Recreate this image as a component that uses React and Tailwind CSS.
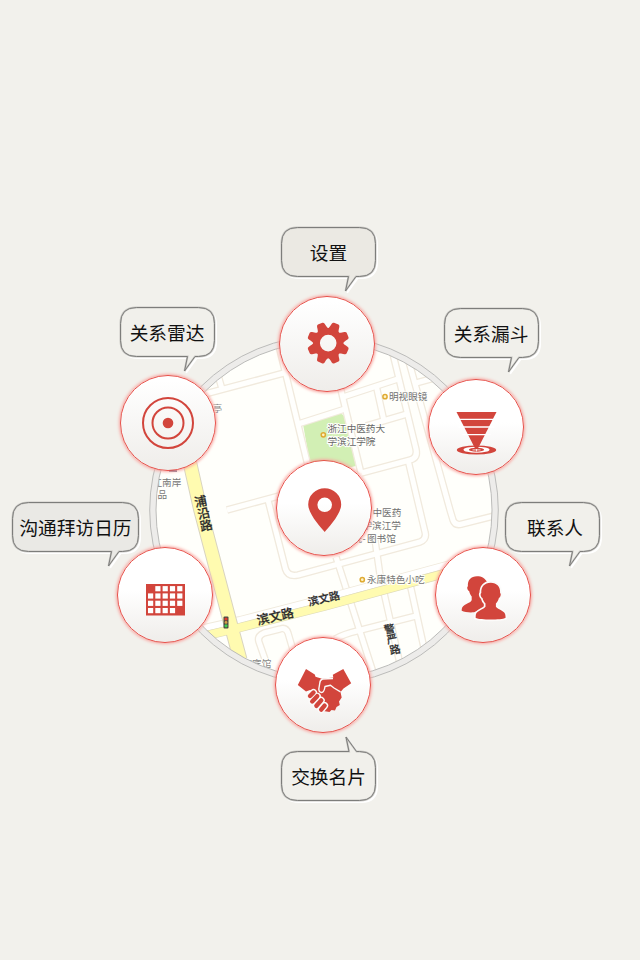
const RED = '#d2453c';
const CJK = "font-['Liberation_Sans','Noto_Sans_CJK_SC',sans-serif]";

const whiteRoads = [
  // north-west block
  'M205 394 L284 373', 'M222 389 L216 368', 'M278 342 L308 466',
  // north-east grid
  'M298 424 L345 409', 'M343 397 L398 379', 'M340 386 L361 473', 'M376.5 387 L384 421',
  'M361.5 473 L410 460 Q418 458 416 449 L392 350', 'M366 426 L407 414', 'M416 383 L438 377',
  'M409 362 L450 510 L453 520 Q455 526 462 524 L502 514',
  'M408 460 L425 532 Q427 539 420 542 L298 575 Q288 577 285.5 569 L268 500',
  // centre
  'M227 510 L290 493',
  'M336 557 L346 588 L373 672', 'M375 540 L380 575 L400 664', 'M410 584 L424 648',
  'M335 639 Q344 634 357 631 L416 616',
  // south
  'M266 662 L259 642 Q257 636 264 633 L280 629 Q286 627 288 633 L293 650',
];

function Label({ x, y, fill, children }) {
  return (
    <text x={x} y={y} fontSize="9.6" fill={fill} stroke="#fffffb" strokeWidth="2" paintOrder="stroke">
      {children}
    </text>
  );
}

function Poi({ x, y }) {
  return <circle cx={x} cy={y} r="2.1" fill="#fff3c4" stroke="#dfaa32" strokeWidth="1.5" />;
}

const mainRoad = 'M200 637 L240 627.5 L325 606 L450 572';
const avenue = 'M187 450 L200.5 510 L229 618 L243 670';

function CityMap() {
  return (
    <svg viewBox="0 0 640 960" className={`absolute inset-0 h-[960px] w-[640px] ${CJK}`}>
      <defs><clipPath id="disc"><circle cx="324" cy="510" r="168" /></clipPath></defs>
      <circle cx="324" cy="510" r="174.3" fill="#edecea" stroke="#bcbcba" />
      <circle cx="324" cy="510" r="168" fill="#fffffb" />
      <g clipPath="url(#disc)">
        <path d="M303 424 L338 414 Q343 413 345 418 L356 466 L312 476 Z" fill="#d2efb4" />
        <g fill="none" strokeLinejoin="round">
          {whiteRoads.map((d) => <path key={d} d={d} stroke="#f1eadd" strokeWidth="7.6" />)}
          {whiteRoads.map((d) => <path key={d} d={d} stroke="#fffffd" strokeWidth="5" />)}
          <path d="M200 629 L240 620 L325 598 L450 564" stroke="#f0eadc" strokeWidth="8" />
          <path d="M200 629 L240 620 L325 598 L450 564" stroke="#ffffff" strokeWidth="6" />
          <path d={mainRoad} stroke="#dedab8" strokeWidth="9.4" />
          <path d={avenue} stroke="#d9d4c0" strokeWidth="14.6" />
          <path d={avenue} stroke="#fffbb0" strokeWidth="12.6" />
          <path d={mainRoad} stroke="#fffbb0" strokeWidth="8" />
        </g>
        <rect x="223.5" y="616.5" width="5" height="12" rx="1" fill="#4d4a45" />
        <circle cx="226" cy="619" r="1.6" fill="#e23c2e" />
        <circle cx="226" cy="622.4" r="1.4" fill="#d8a044" />
        <circle cx="226" cy="625.8" r="1.6" fill="#42cf4c" />
        <rect x="169" y="469" width="8" height="3" fill="#75708c" />
        <Label x={212.5} y={411.5} fill="#888">亭</Label>
        <Label x={152.5} y={485.5} fill="#777">江南岸</Label>
        <Label x={157.5} y={498} fill="#777">品</Label>
        <Label x={389} y={400} fill="#707070">明视眼镜</Label>
        <Label x={327.5} y={432} fill="#666">浙江中医药大</Label>
        <Label x={327.5} y={444.5} fill="#666">学滨江学院</Label>
        <Label x={372.5} y={516} fill="#707070">中医药</Label>
        <Label x={362.5} y={528.5} fill="#707070">学滨江学</Label>
        <Label x={352.5} y={541.5} fill="#707070">院</Label>
        <Label x={362.5} y={541.5} fill="#707070">-</Label>
        <Label x={367} y={541.5} fill="#707070">图书馆</Label>
        <Label x={367} y={583} fill="#777">永康特色小吃</Label>
        <Label x={242.5} y={667} fill="#888">宾宾馆</Label>
        <Poi x={385} y={396.7} /><Poi x={323.3} y={434.8} /><Poi x={362.3} y={579.7} />
        <g fill="#2c2c2c" fontWeight="500" stroke="#2c2c2c" strokeWidth=".2">
          <g fontSize="12.5">
            <text x="194.5" y="506" transform="rotate(-12 200.7 502)">浦</text>
            <text x="197.5" y="518" transform="rotate(-12 203.5 514)">沿</text>
            <text x="200" y="530" transform="rotate(-12 206 526)">路</text>
            <text x="258" y="625" transform="rotate(-13 258 625)">滨文路</text>
          </g>
          <g fontSize="10.8">
            <text x="309" y="606" transform="rotate(-13 309 606)">滨文路</text>
            <text x="384" y="633" transform="rotate(-12 389 629)">警</text>
            <text x="386.5" y="643" transform="rotate(-12 392 639)">严</text>
            <text x="389.5" y="653.5" transform="rotate(-12 395 649.5)">路</text>
          </g>
        </g>
      </g>
      <circle cx="324" cy="510" r="168" fill="none" stroke="#bcbcba" />
    </svg>
  );
}

function Bubble({ className, width = 94, up = false, fill = '#f1f0eb', shift = '', children }) {
  const r = width - 15.5;
  const e = width + 0.5;
  const t = width > 100 ? 96 : 64;
  const d = up
    ? `M16.5 16.5 H68 L65 2 L75.5 16.5 H${r} Q${e} 16.5 ${e} 32.5 V49.5 Q${e} 65.5 ${r} 65.5 H16.5 Q.5 65.5 .5 49.5 V32.5 Q.5 16.5 16.5 16.5 Z`
    : `M16.5 .5 H${r} Q${e} .5 ${e} 16.5 V33.5 Q${e} 49.5 ${r} 49.5 H${t + 11} L${t + 0.5} 64 L${t + 3.5} 49.5 H16.5 Q.5 49.5 .5 33.5 V16.5 Q.5 .5 16.5 .5 Z`;
  return (
    <div className={`absolute ${className}`}>
      <svg className="absolute inset-0 h-full w-full overflow-visible">
        <path d={d} fill="#fff" stroke="#fff" strokeWidth="1.5" transform="translate(1.8 1.8)" />
        <path d={d} fill={fill} stroke="#c9c8c4" strokeWidth="2" />
        <path d={d} fill="none" stroke="#7d7d7b" strokeWidth="1" />
      </svg>
      <div className={`relative flex h-[50px] items-center justify-center whitespace-nowrap pt-[5px] text-[18.7px] leading-none text-[#111] ${shift} ${up ? 'mt-4 pt-[4px]' : ''}`}>
        {children}
      </div>
    </div>
  );
}

function Node({ className, shade = 'from-45%', children }) {
  return (
    <div className={`absolute size-24 rounded-full border border-[#e8504a] bg-linear-to-b from-white to-[#efedea] shadow-[0_0_3px_1px_#f8a9a4] ${shade} ${className}`}>
      <svg viewBox="-48 -48 96 96" className="absolute -inset-px size-24" fill={RED}>{children}</svg>
    </div>
  );
}

const cells = [];
for (let r = 0; r < 4; r++) for (let c = 0; c < 5; c++) {
  if ((r === 0 && c === 0) || (r === 3 && c === 4)) continue;
  cells.push([c, r]);
}

const gearTeeth = [22.5, 67.5, 112.5, 157.5, 202.5, 247.5, 292.5, 337.5];

export default function App() {
  return (
    <main className={`relative h-[960px] w-[640px] overflow-hidden bg-[#f2f1ec] ${CJK}`}>
      <CityMap />

      <Node className="left-[279px] top-[296px]" shade="from-5%">
        <g transform="translate(1.2 -.9)">
          {gearTeeth.map((a) => <path key={a} d="M-6.2 -13 C-4.6 -15 -4.6 -16.5 -4.1 -19.2 Q-3.8 -20.9 -2.4 -21 H2.4 Q3.8 -20.9 4.1 -19.2 C4.6 -16.5 4.6 -15 6.2 -13 Z" transform={`rotate(${a})`} />)}
          <circle r="11.7" fill="none" stroke={RED} strokeWidth="6.8" />
        </g>
      </Node>
      <Node className="left-[120px] top-[375px]" shade="from-5%">
        <circle r="25" fill="none" stroke={RED} strokeWidth="2" />
        <circle r="15.5" fill="none" stroke={RED} strokeWidth="2" />
        <circle r="5.3" />
      </Node>
      <Node className="left-[428px] top-[379px]">
        <g transform="translate(.5 0)">
          <ellipse cy="23" rx="19.7" ry="4.5" />
          <ellipse cy="22.7" rx="13" ry="3" fill="#fff" />
          <ellipse cy="22.7" rx="7.6" ry="2" />
          <path d="M-4 22.9 H4 M0 20.5 V24.5" stroke="#fff" strokeWidth=".8" />
          <path d="M-20 -15 H20 L1.2 22 H-1.2 Z" />
          <path d="M-20 -7.7 H20 M-18 0 H18 M-14 7.6 H14" stroke="#fff" strokeWidth="1.3" />
        </g>
      </Node>
      <Node className="left-[276px] top-[460px]">
        <path transform="translate(.7 0)" fillRule="evenodd" d="M0 24 C-3.5 20 -16.5 6 -16.5 -3.5 A16.5 16.3 0 1 1 16.5 -3.5 C16.5 6 3.5 20 0 24 Z M0 -10.5 A7.3 7.3 0 1 0 0 4.1 A7.3 7.3 0 1 0 0 -10.5 Z" />
      </Node>
      <Node className="left-[117px] top-[547px]">
        <g transform="translate(-.5 .5)">
          <rect x="-18.5" y="-11.5" width="39" height="31.5" />
          {cells.map(([c, r]) => <rect key={`${c}-${r}`} x={-16.5 + c * 7.3} y={-9.4 + r * 7.3} width="5.2" height="5.2" fill="#fff" />)}
        </g>
      </Node>
      <Node className="left-[435px] top-[547px]">
        <g transform="translate(.5 0)">
          <path d="M-6.5 -18.8 C-12.5 -18.8 -16 -15 -15.6 -8.8 C-17 -8 -16 -4.5 -14.4 -4 C-13.8 -1.5 -12.8 .5 -11.8 1.5 V5 C-12.5 8.5 -21.8 9 -21.8 14.5 V15.8 C-19 17.5 -13 17.5 -9.5 17.3 L4 12 V-12 C2 -17 -2 -18.8 -6.5 -18.8 Z" />
          <path d="M7.2 -12.2 C1 -12.2 -2.6 -8 -2.2 -2 C-3.6 -1.2 -2.6 2.5 -1 3 C-.4 5.5 .8 7.5 2 8.5 V11.8 C0 15 -7.8 15.3 -7.8 21 V23 C-3 25 17.5 25 22 23 V21 C22 15.3 14.4 15 12.4 11.8 V8.5 C13.6 7.5 14.8 5.5 15.4 3 C17 2.5 18 -1.2 16.6 -2 C17 -8 13.4 -12.2 7.2 -12.2 Z" stroke="#fcfbfa" strokeWidth="3.4" paintOrder="stroke" />
        </g>
      </Node>
      <Node className="left-[275px] top-[637px]">
        <path d="M-17 -16 L-25.2 0 L-17 6.5 L-13 5 L-8 7 L.5 26 L6.5 27 L8.5 25 L12 25.5 L13.5 22 L16.8 20 L16 16.5 L18.7 12.5 L17.5 7 L20.5 3.5 L28.2 -1.7 L20.3 -16 L9.8 -10.3 L10.3 -7.6 L-1 -6.2 L-7.5 -8.2 L-8.2 -10.5 Z" />
        <g stroke="#fbfaf9" strokeWidth="7.2" strokeLinecap="round">
          <path d="M-9.5 7.5 L-13 11 M-5.8 11.2 L-10.8 16.4 M-1.8 15.4 L-6.6 20.8 M1.6 20.6 L-1.8 24.6" />
        </g>
        <g stroke={RED} strokeWidth="4.4" strokeLinecap="round">
          <path d="M-9.5 7.5 L-13 11 M-5.8 11.2 L-10.8 16.4 M-1.8 15.4 L-6.6 20.8 M1.6 20.6 L-1.8 24.6" />
        </g>
        <path d="M10 -6.5 L-.5 -6 Q-3 -5 -3.2 -2 L-4.2 4 Q-4 8 -.8 7.4 Q1.3 6.5 2 1.5 L7.5 .3 L11 3 L17.5 6.8" fill="none" stroke="#fbfaf9" strokeWidth="1.4" strokeLinejoin="round" />
      </Node>

      <Bubble className="left-[281px] top-[227px] h-[50px] w-[95px]" fill="#ebe9e3">设置</Bubble>
      <Bubble className="left-[120px] top-[307px] h-[50px] w-[95px]" shift="pr-px">关系雷达</Bubble>
      <Bubble className="left-[444px] top-[308px] h-[50px] w-[95px]" shift="pr-px">关系漏斗</Bubble>
      <Bubble className="left-[12px] top-[502px] h-[50px] w-[127px]" width={126} fill="#eae9e5">沟通拜访日历</Bubble>
      <Bubble className="left-[505px] top-[502px] h-[50px] w-[95px]" shift="pl-[5px]">联系人</Bubble>
      <Bubble className="left-[281px] top-[735px] h-[66px] w-[95px]" up>交换名片</Bubble>
    </main>
  );
}
